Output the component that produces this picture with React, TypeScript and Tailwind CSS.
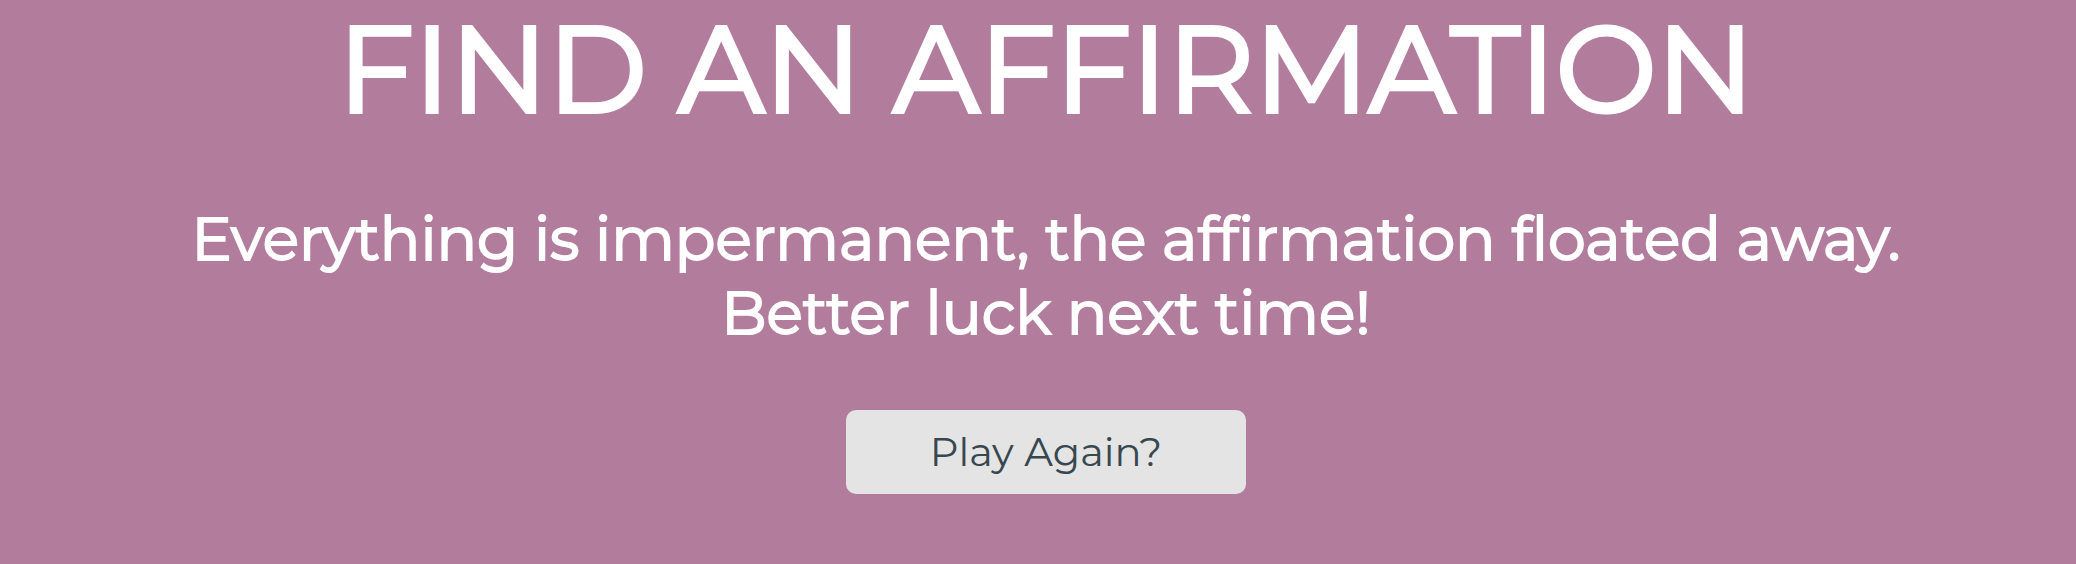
export default function App() {
  return (
    <main className="flex min-h-screen flex-col items-center bg-[#b27c9d] pl-4 text-center text-white [font-family:Montserrat,Inter,sans-serif]">
      <h1 className="text-[120px] leading-[138px] font-normal [-webkit-text-stroke:4px_white]">
        FIND AN AFFIRMATION
      </h1>
      <h2 className="mt-16 text-[60px] leading-[74px] font-normal [-webkit-text-stroke:2px_white]">
        Everything is impermanent, the affirmation floated away.
        <br />
        Better luck next time!
      </h2>
      <button type="button" className="mt-[60px] h-[84px] w-[400px] rounded-[10px] bg-[#e4e4e4] text-[40px] text-[#37474f]">
        Play Again?
      </button>
    </main>
  );
}
